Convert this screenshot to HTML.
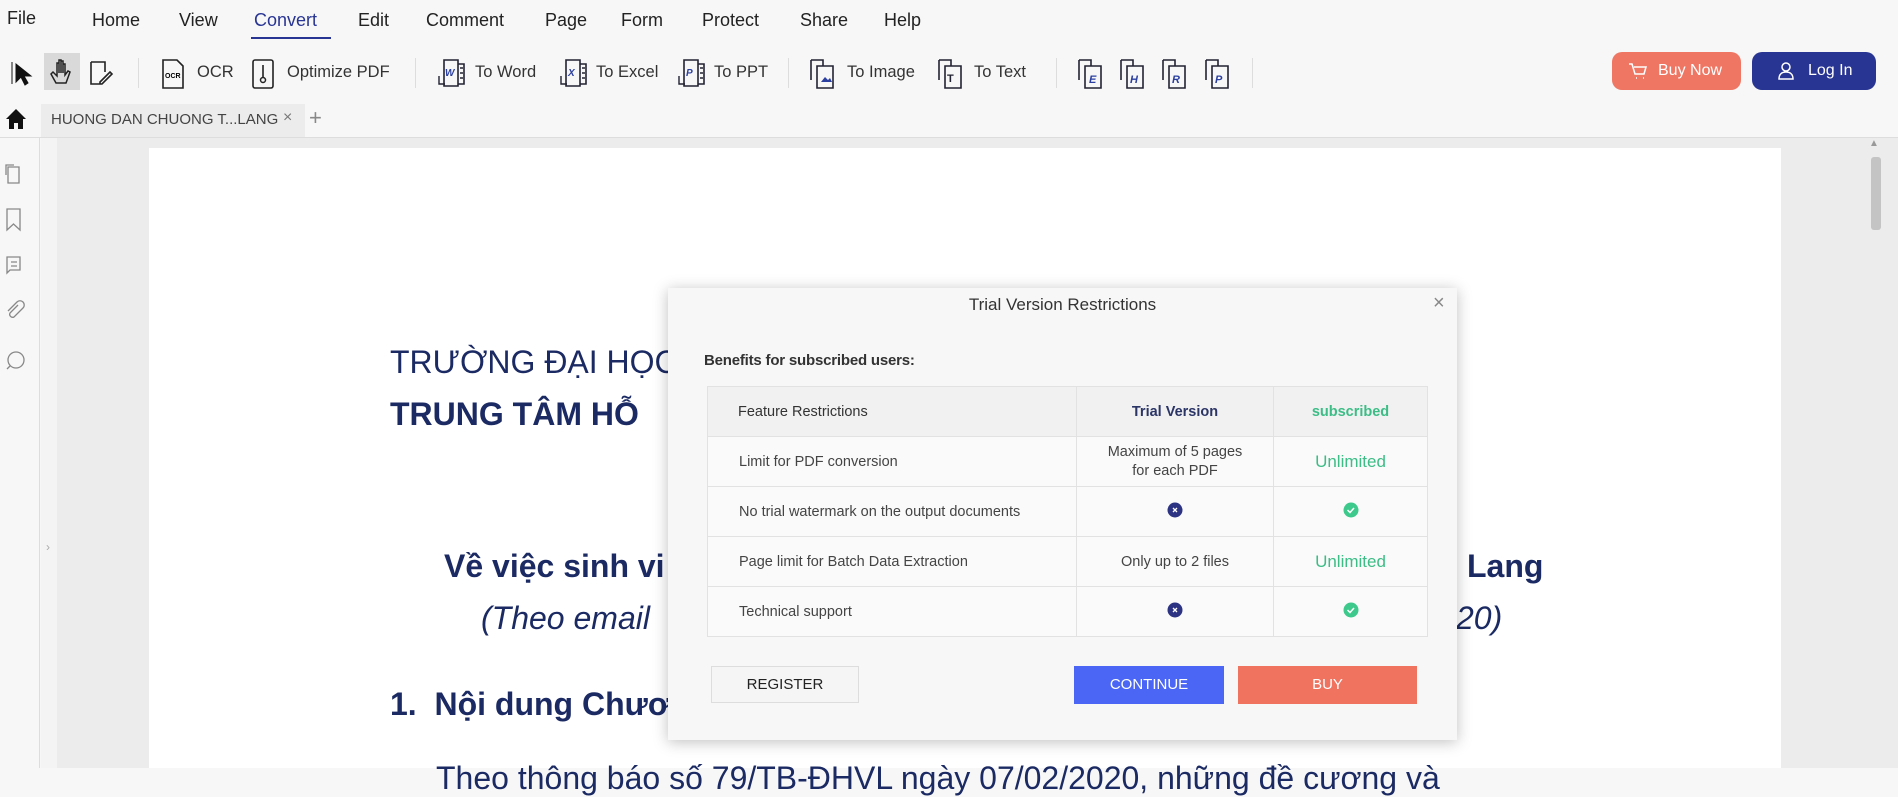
<!DOCTYPE html>
<html><head><meta charset="utf-8"><style>
*{margin:0;padding:0;box-sizing:border-box}
body{width:1898px;height:768px;overflow:hidden;background:#f7f7f7;font-family:"Liberation Sans",sans-serif;position:relative;color:#333}
.a{position:absolute;white-space:nowrap}
.m{font-size:18px;color:#222;top:10px}
.t{font-size:16.5px;color:#333;top:63px}
.sep{position:absolute;top:58px;width:1px;height:30px;background:#ddd}
.ic{position:absolute;top:58px}
.doc{color:#1b2a63}
td{border:1px solid #e2e2e2;font-size:14.5px;color:#444;height:50px}
</style></head><body>
<div class="a m" style="left:7px;top:8px">File</div>
<div class="a m" style="left:92px">Home</div>
<div class="a m" style="left:179px">View</div>
<div class="a m" style="left:254px;color:#283593">Convert</div>
<div class="a" style="left:251px;top:37px;width:80px;height:2px;background:#283593"></div>
<div class="a m" style="left:358px">Edit</div>
<div class="a m" style="left:426px">Comment</div>
<div class="a m" style="left:545px">Page</div>
<div class="a m" style="left:621px">Form</div>
<div class="a m" style="left:702px">Protect</div>
<div class="a m" style="left:800px">Share</div>
<div class="a m" style="left:884px">Help</div>

<svg class="ic" style="left:10px" width="26" height="30"><path d="M2 4v22M6 6l0 18 5-5 4 8 3-2-4-7 7 0z" fill="#111" stroke="#111" stroke-width="1"/></svg>
<div class="a" style="left:44px;top:53px;width:36px;height:37px;background:#d9d9d9"></div>
<svg class="ic" style="left:48px;top:57px" width="28" height="30"><path d="M8 26l-5-9 2-2 4 4V6h2v10V3h2v13V4h2v12V7h2v11l3-4 2 1-4 11z" fill="none" stroke="#222" stroke-width="1.5"/></svg>
<svg class="ic" style="left:88px" width="26" height="30"><path d="M3 4h14v10M3 4v22h10M12 24l10-10 2 2-10 10h-2z" fill="none" stroke="#222" stroke-width="1.6"/></svg>
<div class="sep" style="left:138px"></div>
<svg class="ic" style="left:160px" width="26" height="32"><path d="M3 2h14l6 6v22H3z" fill="none" stroke="#222" stroke-width="1.6"/><text x="5" y="20" font-size="7" font-weight="bold" font-family="Liberation Sans">OCR</text></svg>
<div class="a t" style="left:197px">OCR</div>
<svg class="ic" style="left:250px" width="26" height="32"><rect x="3" y="2" width="20" height="28" rx="2" fill="none" stroke="#222" stroke-width="1.6"/><path d="M13 7v12" stroke="#222" stroke-width="1.6"/><circle cx="13" cy="22" r="2.5" fill="none" stroke="#222" stroke-width="1.5"/></svg>
<div class="a t" style="left:287px">Optimize PDF</div>
<div class="sep" style="left:415px"></div>
<svg class="ic" style="left:436px" width="30" height="32"><path d="M8 2h14v26H8z M22 6h6v20h-6 M24 10h3M24 15h3M24 20h3" fill="none" stroke="#223" stroke-width="1.6"/><text x="9" y="18" font-size="10" font-weight="bold" fill="#2b3fa0" font-style="italic">W</text><path d="M3 18v8h6" fill="none" stroke="#223" stroke-width="1.4"/></svg>
<div class="a t" style="left:475px">To Word</div>
<svg class="ic" style="left:558px" width="30" height="32"><path d="M8 2h14v26H8z M22 6h6v20h-6 M24 10h3M24 15h3M24 20h3" fill="none" stroke="#223" stroke-width="1.6"/><text x="10" y="18" font-size="10" font-weight="bold" fill="#2b3fa0" font-style="italic">X</text><path d="M3 18v8h6" fill="none" stroke="#223" stroke-width="1.4"/></svg>
<div class="a t" style="left:596px">To Excel</div>
<svg class="ic" style="left:676px" width="30" height="32"><path d="M8 2h14v26H8z M22 6h6v20h-6 M24 10h3M24 15h3M24 20h3" fill="none" stroke="#223" stroke-width="1.6"/><text x="10" y="18" font-size="10" font-weight="bold" fill="#2b3fa0" font-style="italic">P</text><path d="M3 18v8h6" fill="none" stroke="#223" stroke-width="1.4"/></svg>
<div class="a t" style="left:714px">To PPT</div>
<div class="sep" style="left:788px"></div>
<svg class="ic" style="left:808px" width="30" height="32"><path d="M3 2h12v6M3 2v20M9 8h16v22H9z" fill="none" stroke="#223" stroke-width="1.6"/><path d="M13 24l4-5 3 3 2-2 2 4z" fill="#2b3fa0"/></svg>
<div class="a t" style="left:847px">To Image</div>
<svg class="ic" style="left:936px" width="30" height="32"><path d="M3 2h12v6M3 2v20M9 8h16v22H9z" fill="none" stroke="#223" stroke-width="1.6"/><text x="11" y="24" font-size="11" font-weight="bold" fill="#223">T</text></svg>
<div class="a t" style="left:974px">To Text</div>
<div class="sep" style="left:1056px"></div>
<svg class="ic" style="left:1076px" width="30" height="32"><path d="M3 2h12v6M3 2v20M9 8h16v22H9z" fill="none" stroke="#223" stroke-width="1.6"/><text x="13" y="25" font-size="11" font-weight="bold" font-style="italic" fill="#2b3fa0">E</text></svg>
<svg class="ic" style="left:1118px" width="30" height="32"><path d="M3 2h12v6M3 2v20M9 8h16v22H9z" fill="none" stroke="#223" stroke-width="1.6"/><text x="12" y="25" font-size="11" font-weight="bold" font-style="italic" fill="#2b3fa0">H</text></svg>
<svg class="ic" style="left:1160px" width="30" height="32"><path d="M3 2h12v6M3 2v20M9 8h16v22H9z" fill="none" stroke="#223" stroke-width="1.6"/><text x="12" y="25" font-size="11" font-weight="bold" font-style="italic" fill="#2b3fa0">R</text></svg>
<svg class="ic" style="left:1203px" width="30" height="32"><path d="M3 2h12v6M3 2v20M9 8h16v22H9z" fill="none" stroke="#223" stroke-width="1.6"/><text x="12" y="25" font-size="11" font-weight="bold" font-style="italic" fill="#2b3fa0">P</text></svg>
<div class="sep" style="left:1252px"></div>

<div class="a" style="left:1612px;top:52px;width:129px;height:38px;border-radius:10px;background:#ef7663;color:#fff;font-size:16px;line-height:38px;padding-left:46px">Buy Now</div>
<svg class="a" style="left:1628px;top:62px" width="20" height="18"><path d="M1 2h3l3 10h9l2-7H6M8 16h1M15 16h1" fill="none" stroke="#fff" stroke-width="1.5"/></svg>
<div class="a" style="left:1752px;top:52px;width:124px;height:38px;border-radius:10px;background:#283593;color:#fff;font-size:16px;line-height:38px;padding-left:56px">Log In</div>
<svg class="a" style="left:1777px;top:61px" width="18" height="20"><circle cx="9" cy="6" r="4" fill="none" stroke="#fff" stroke-width="1.5"/><path d="M2 18c0-5 3-7 7-7s7 2 7 7z" fill="none" stroke="#fff" stroke-width="1.5"/></svg>

<svg class="a" style="left:5px;top:108px" width="22" height="22"><path d="M11 1L1 11h3v10h5v-6h4v6h5V11h3z" fill="#111"/></svg>
<div class="a" style="left:41px;top:104px;width:264px;height:33px;background:#ececec"></div>
<div class="a" style="left:51px;top:111px;font-size:15px;color:#444">HUONG DAN CHUONG T...LANG</div>
<div class="a" style="left:283px;top:109px;font-size:16px;color:#777">×</div>
<div class="a" style="left:309px;top:105px;font-size:22px;color:#888">+</div>
<div class="a" style="left:0;top:137px;width:1898px;height:1px;background:#ddd"></div>

<div class="a" style="left:0;top:138px;width:40px;height:630px;background:#f7f7f7;border-right:1px solid #ddd"></div>
<div class="a" style="left:41px;top:138px;width:16px;height:630px;background:#f4f4f4"></div>
<div class="a" style="left:57px;top:138px;width:1841px;height:630px;background:#ececec"></div>
<svg class="a" style="left:4px;top:163px" width="24" height="220" fill="none" stroke="#888" stroke-width="1.3">
<path d="M2 12V2h8M4 4h11v16H4z"/>
<path d="M3 46h13v21l-6.5-6L3 67z"/>
<path d="M3 94h13v13H6l-3 3z M7 99h6M7 103h6"/>
<path d="M14 142l-8 8a3 3 0 0 0 4 4l9-9a4 4 0 0 0-6-6l-9 9"/>
<circle cx="12" cy="197" r="8"/><path d="M6 203l-3 3"/>
</svg>
<div class="a" style="left:46px;top:540px;font-size:12px;color:#aaa">›</div>
<div class="a" style="left:149px;top:148px;width:1632px;height:620px;background:#fff"></div>
<div class="a" style="left:1871px;top:157px;width:10px;height:73px;background:#c4c4c4;border-radius:3px"></div>
<div class="a" style="left:1869px;top:138px;font-size:10px;color:#999">▲</div>

<div class="a doc" style="left:390px;top:344px;font-size:32px">TRƯỜNG ĐẠI HỌC</div>
<div class="a doc" style="left:390px;top:396px;font-size:32px;font-weight:bold">TRUNG TÂM HỖ</div>
<div class="a doc" style="left:444px;top:548px;font-size:32px;font-weight:bold">Về việc sinh vi</div>
<div class="a doc" style="left:1467px;top:548px;font-size:32px;font-weight:bold">Lang</div>
<div class="a doc" style="left:481px;top:600px;font-size:32px;font-style:italic">(Theo email</div>
<div class="a doc" style="left:1456px;top:600px;font-size:32px;font-style:italic">20)</div>
<div class="a doc" style="left:390px;top:686px;font-size:32px;font-weight:bold">1.&nbsp; Nội dung Chươ</div>
<div class="a doc" style="left:436px;top:760px;font-size:32px">Theo thông báo số 79/TB-ĐHVL ngày 07/02/2020, những đề cương và</div>

<div class="a" style="left:668px;top:288px;width:789px;height:452px;background:#f7f7f7;box-shadow:0 2px 14px rgba(0,0,0,.25)"></div>
<div class="a" style="left:668px;top:295px;width:789px;text-align:center;font-size:17px;color:#333">Trial Version Restrictions</div>
<div class="a" style="left:1433px;top:292px;font-size:20px;color:#888">×</div>
<div class="a" style="left:704px;top:352px;font-size:15px;color:#333;font-weight:bold;letter-spacing:-.2px">Benefits for subscribed users:</div>
<table class="a" style="left:707px;top:386px;width:721px;border-collapse:collapse;background:#fafafa">
<tr style="background:#f1f1f1"><td style="width:369px;padding-left:30px;height:49px;color:#333">Feature Restrictions</td><td style="width:197px;text-align:center;color:#2b3566;font-weight:bold">Trial Version</td><td style="text-align:center;color:#3cbd86;font-weight:bold">subscribed</td></tr>
<tr><td style="padding-left:31px">Limit for PDF conversion</td><td style="text-align:center;line-height:19px">Maximum of 5 pages<br>for each PDF</td><td style="text-align:center;color:#3cbd86;font-size:17px">Unlimited</td></tr>
<tr><td style="padding-left:31px">No trial watermark on the output documents</td><td style="text-align:center"><svg width="16" height="16"><circle cx="8" cy="8" r="7.5" fill="#2c3382"/><path d="M6 6l4 4M10 6l-4 4" stroke="#fff" stroke-width="1.3"/></svg></td><td style="text-align:center"><svg width="16" height="16"><circle cx="8" cy="8" r="7.5" fill="#3cc98b"/><path d="M4.5 8l2.5 2.5 4-4.5" fill="none" stroke="#fff" stroke-width="1.5"/></svg></td></tr>
<tr><td style="padding-left:31px">Page limit for Batch Data Extraction</td><td style="text-align:center">Only up to 2 files</td><td style="text-align:center;color:#3cbd86;font-size:17px">Unlimited</td></tr>
<tr><td style="padding-left:31px">Technical support</td><td style="text-align:center"><svg width="16" height="16"><circle cx="8" cy="8" r="7.5" fill="#2c3382"/><path d="M6 6l4 4M10 6l-4 4" stroke="#fff" stroke-width="1.3"/></svg></td><td style="text-align:center"><svg width="16" height="16"><circle cx="8" cy="8" r="7.5" fill="#3cc98b"/><path d="M4.5 8l2.5 2.5 4-4.5" fill="none" stroke="#fff" stroke-width="1.5"/></svg></td></tr>
</table>
<div class="a" style="left:711px;top:666px;width:148px;height:37px;border:1px solid #ddd;background:#f5f5f5;text-align:center;line-height:35px;font-size:15px;color:#222">REGISTER</div>
<div class="a" style="left:1074px;top:666px;width:150px;height:38px;background:#4b66f5;text-align:center;line-height:38px;font-size:15px;color:#fff">CONTINUE</div>
<div class="a" style="left:1238px;top:666px;width:179px;height:38px;background:#f07360;text-align:center;line-height:38px;font-size:15px;color:#fff">BUY</div>
</body></html>
